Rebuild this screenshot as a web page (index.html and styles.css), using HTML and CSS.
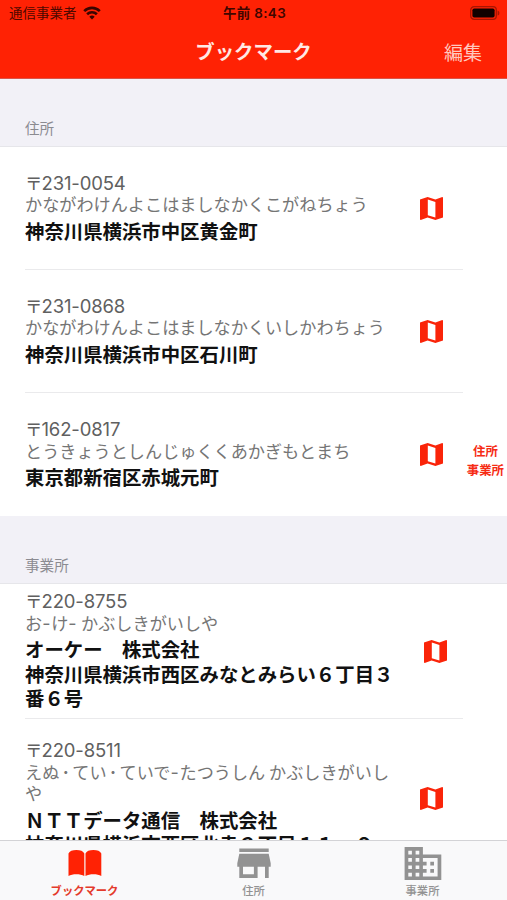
FILE: index.html
```html
<!DOCTYPE html>
<html lang="ja">
<head>
<meta charset="utf-8">
<title>ブックマーク</title>
<link rel="stylesheet" href="styles.css">
</head>
<body>
<svg class="defs" width="0" height="0">
  <symbol id="map" viewBox="0 0 23 23">
    <path fill-rule="evenodd" d="M0 2.4 7.6 0l7.8 2.4L22.3 0 23 .6v19.8L15.4 23l-7.8-2.5L.7 23 0 22.4zM7.800 2.500v15.800l7.600 2.300V4.900z"/>
  </symbol>
</svg>
<div class="app">
  <header class="top">
    <div class="status">
      <div class="carrier">通信事業者
        <svg class="wifi" viewBox="0 0 18 14"><path d="M9 13.6 6.3 10.8a3.8 3.8 0 0 1 5.4 0z"/><path class="arc" d="M4.1 8.2a7 7 0 0 1 9.8 0M1.2 5.1a11.1 11.1 0 0 1 15.6 0"/></svg>
      </div>
      <div class="time">午前 8:43</div>
      <svg class="battery" viewBox="0 0 30 14"><rect class="shell" x=".7" y=".7" width="25.6" height="12.6" rx="3.4"/><rect x="2.4" y="2.4" width="22.2" height="9.2" rx="1.8"/><path class="tip" d="M27.6 4.4c2.4.8 2.4 4.4 0 5.2z"/></svg>
    </div>
    <div class="nav"><h1>ブックマーク</h1><span class="edit">編集</span></div>
  </header>
  <main class="list">
    <h2 class="section">住所</h2>
    <ul class="group">
      <li class="item"><div class="text"><p class="zip"><i>〒</i>231-0054</p><p class="kana">かながわけんよこはましなかくこがねちょう</p><p class="name">神奈川県横浜市中区黄金町</p></div><svg class="map"><use href="#map"/></svg></li>
      <li class="item"><div class="text"><p class="zip"><i>〒</i>231-0868</p><p class="kana">かながわけんよこはましなかくいしかわちょう</p><p class="name">神奈川県横浜市中区石川町</p></div><svg class="map"><use href="#map"/></svg></li>
      <li class="item"><div class="text"><p class="zip"><i>〒</i>162-0817</p><p class="kana">とうきょうとしんじゅくくあかぎもとまち</p><p class="name">東京都新宿区赤城元町</p></div><svg class="map"><use href="#map"/></svg></li>
    </ul>
    <h2 class="section">事業所</h2>
    <ul class="group">
      <li class="item office"><div class="text"><p class="zip"><i>〒</i>220-8755</p><p class="kana">お<b>-</b>け<b>-</b> かぶしきがいしや</p><p class="name">オーケー　株式会社<br>神奈川県横浜市西区みなとみらい６丁目３<br>番６号</p></div><svg class="map shifted"><use href="#map"/></svg></li>
      <li class="item tall"><div class="text"><p class="zip"><i>〒</i>220-8511</p><p class="kana">えぬ<b class="dot">·</b>てい<b class="dot">·</b>ていで<b>-</b>たつうしん かぶしきがいし<br>や</p><p class="name">ＮＴＴデータ通信　株式会社<br>神奈川県横浜市西区北幸２丁目１１－９</p></div><svg class="map"><use href="#map"/></svg></li>
    </ul>
  </main>
  <nav class="index"><span>住所</span><span>事業所</span></nav>
  <footer class="tabs">
    <div class="tab active">
      <svg viewBox="0 0 38 34"><path d="M2.500 29V6.500C3.500 4 6.500 2.900 10.400 2.900S17.300 4 18.300 6.500V29c-4-2.300-12-2.300-15.800 0zM19.500 29V6.500c1-2.500 4-3.600 7.900-3.600s6.900 1.100 7.900 3.600V29c-3.800-2.300-11.800-2.300-15.800 0z"/></svg>
      <span>ブックマーク</span>
    </div>
    <div class="tab">
      <svg viewBox="0 0 38 34"><path fill-rule="evenodd" d="M4.300 1.500h29.400v3.400H4.300zM4.300 6.700h29.400l2 9.600v3.400h-2v11.300h-3.700V19.700h-7.400V31H4.300V19.700h-2v-3.400zM8 19.700v7.600h10.900v-7.600z"/></svg>
      <span>住所</span>
    </div>
    <div class="tab">
      <svg viewBox="0 0 38 34"><path fill-rule="evenodd" d="M.6 0h18.300v7.400h18.400v25.700H.6zM4.300 3.700v3.700h3.600V3.700zM11.600 3.700v3.700h3.700V3.700zM4.300 11v3.700h3.600V11zM11.600 11v3.700h3.700V11zM4.300 18.400V22h3.600v-3.600zM11.600 18.400V22h3.700v-3.600zM4.300 25.700v3.700h3.600v-3.700zM11.600 25.700v3.700h3.700v-3.700zM18.900 11v3.700h3.700v3.700h-3.700V22h3.700v3.700h-3.700v3.700h14.700V11zM26.300 14.700h3.700v3.700h-3.700zM26.300 22h3.700v3.700h-3.700z"/></svg>
      <span>事業所</span>
    </div>
  </footer>
</div>
</body>
</html>
```
FILE: styles.css
```css
* { box-sizing: border-box; margin: 0; padding: 0; }
body { font-family: "Inter", "Noto Sans CJK JP", sans-serif; background: #f2f1f7; }
.defs { display: block; height: 0; }
.app { position: relative; width: 507px; height: 900px; overflow: hidden; display: flex; flex-direction: column; }
.top { height: 79px; flex: none; background: #ff2204; border-bottom: 1px solid #d9554a; }
.status { height: 27px; display: grid; grid-template-columns: 1fr auto 1fr; align-items: center; padding: 0 7px 0 9px; color: #4d0800; font-size: 13.5px; line-height: 27px; }
.carrier { display: flex; align-items: center; gap: 6px; }
.wifi { width: 18px; height: 14px; margin-top: -2px; fill: #3a0500; }
.wifi .arc { fill: none; stroke: #3a0500; stroke-width: 2.6; }
.time { font-weight: 600; font-size: 13.4px; letter-spacing: .4px; color: #400600; }
.battery { width: 30px; height: 14px; margin-top: -1px; justify-self: end; fill: #120100; }
.battery .shell { fill: none; stroke: #a81502; stroke-width: 1.3; }
.battery .tip { fill: #a81502; }
.nav { height: 50px; display: grid; grid-template-columns: 1fr auto 1fr; align-items: center; padding: 0 25px; color: #ffe9e4; }
h1 { grid-column: 2; font-size: 19.4px; font-weight: 700; line-height: 50px; }
.edit { justify-self: end; margin-top: -2px; font-size: 19px; font-weight: 400; color: #ffc9bf; }
.list { flex: 1; min-height: 0; overflow: hidden; }
.section { height: 68px; padding: 39px 0 0 25px; font-size: 14.6px; line-height: 22px; font-weight: 400; color: #8b8b91; border-bottom: 1px solid #e6e6ea; }
.group { list-style: none; background: #fff; }
.item { height: 123px; display: flex; align-items: center; justify-content: space-between; margin-left: 25px; margin-right: 44px; padding-right: 20px; border-bottom: 1.4px solid #eaeaec; }
.item:last-child { border-bottom: 0; }
.office { height: 135px; }
.tall { height: 159px; }
.text { white-space: nowrap; }
.zip { font-size: 18.5px; line-height: 20.5px; color: #606060; letter-spacing: -.15px; }
.zip i { font: 400 17.5px/1 "Noto Sans CJK JP"; letter-spacing: -1px; }
.kana { font-size: 17.15px; line-height: 21.300px; color: #757575; font-family: "Noto Sans CJK JP", sans-serif; font-weight: 400; }
.kana b { font: 400 18px/1 "Inter"; letter-spacing: .7px; }
.kana .dot { padding: 0 3.5px; font-weight: 700; letter-spacing: 0; }
.name { margin-top: 4.500px; font-size: 19.4px; line-height: 24.500px; font-weight: 700; color: #111; font-family: "Noto Sans CJK JP", sans-serif; }
.map { width: 23px; height: 23px; flex: none; fill: #fa2409; }
.map.shifted { margin-right: -4px; }
.index { position: absolute; right: 3px; top: 442px; display: flex; flex-direction: column; align-items: center; font-size: 12.4px; font-weight: 700; line-height: 19px; color: #f62b14; }
.tabs { height: 60px; flex: none; display: grid; grid-template-columns: repeat(3, 1fr); background: #f9f9fa; border-top: 1px solid #d3d3d6; }
.tab { display: flex; flex-direction: column; align-items: center; padding-top: 6px; color: #929292; font-size: 11.300px; font-weight: 500; }
.tab svg { width: 38px; height: 34px; fill: currentColor; flex: none; }
.tab span { line-height: 18px; margin-top: 1px; }
.tab.active { color: #ff2204; }
.tab.active span { color: #e43a2b; font-weight: 700; }
```
